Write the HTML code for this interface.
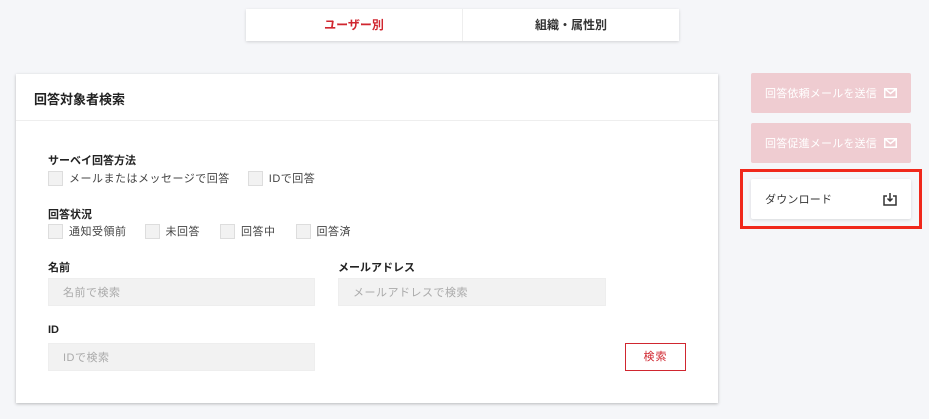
<!DOCTYPE html>
<html><head><meta charset="utf-8"><style>
*{box-sizing:border-box;margin:0;padding:0}
body{width:929px;height:419px;background:#f5f6f9;font-family:"Liberation Sans","Noto Sans CJK JP",sans-serif;position:relative;overflow:hidden;color:#333}
.abs{position:absolute}
.tabs{left:246px;top:9px;width:433px;height:32px;background:#fff;box-shadow:0 1px 3px rgba(0,0,0,.15);display:flex}
.tabs div{flex:1;text-align:center;line-height:32px;font-size:12px;font-weight:bold}
.tabs div:first-child{color:#d0262f;border-right:1px solid #eee}
.card{left:16px;top:74px;width:702px;height:329px;background:#fff;box-shadow:0 1px 3px rgba(0,0,0,.25)}
.hdr{height:47px;border-bottom:1px solid #eee;font-size:13px;font-weight:bold;padding:15px 0 0 18px;color:#222}
.lbl{font-size:11px;font-weight:bold;color:#222}
.cb{display:inline-block;width:15px;height:15px;background:#f2f2f2;border:1px solid #ddd;vertical-align:middle;margin-right:6px}
.row{font-size:11px;color:#444;white-space:nowrap;letter-spacing:0.5px}
.row span{margin-right:18px;display:inline-flex;align-items:center}
.row.s span{margin-right:20px}
.inp{background:#f2f2f2;border:1px solid #eee;height:28px;font-size:11px;color:#aaa;padding:5px 0 0 14px;letter-spacing:0.5px}
.btn{left:751px;width:160px;height:40px;border-radius:2px;font-size:11px;padding:0 14px;display:flex;align-items:center;justify-content:space-between;letter-spacing:0.2px;white-space:nowrap}
.pink{background:#efccd1;color:#fff}
</style></head><body>
<div class="abs tabs"><div>ユーザー別</div><div>組織・属性別</div></div>
<div class="abs card">
<div class="hdr">回答対象者検索</div>
<div class="abs lbl" style="left:32px;top:78px">サーベイ回答方法</div>
<div class="abs row" style="left:32px;top:96px"><span><i class="cb"></i>メールまたはメッセージで回答</span><span><i class="cb"></i>IDで回答</span></div>
<div class="abs lbl" style="left:32px;top:132px">回答状況</div>
<div class="abs row s" style="left:32px;top:149px"><span style="margin-right:18px"><i class="cb"></i>通知受領前</span><span><i class="cb"></i>未回答</span><span><i class="cb"></i>回答中</span><span><i class="cb"></i>回答済</span></div>
<div class="abs lbl" style="left:32px;top:185px">名前</div>
<div class="abs inp" style="left:32px;top:204px;width:267px">名前で検索</div>
<div class="abs lbl" style="left:322px;top:185px">メールアドレス</div>
<div class="abs inp" style="left:322px;top:204px;width:268px">メールアドレスで検索</div>
<div class="abs lbl" style="left:32px;top:250px">ID</div>
<div class="abs inp" style="left:32px;top:269px;width:267px">IDで検索</div>
<div class="abs" style="left:609px;top:269px;width:61px;height:28px;border:1px solid #d0262f;color:#d0262f;font-size:11px;text-align:center;line-height:26px;letter-spacing:1px">検索</div>
</div>
<div class="abs btn pink" style="top:73px">回答依頼メールを送信<svg width="13" height="10" viewBox="0 0 13 10"><rect x="0.75" y="0.75" width="11.5" height="8.5" fill="none" stroke="#fff" stroke-width="1.5"/><path d="M1 1l5.5 4.5L12 1" fill="none" stroke="#fff" stroke-width="1.5"/></svg></div>
<div class="abs btn pink" style="top:123px">回答促進メールを送信<svg width="13" height="10" viewBox="0 0 13 10"><rect x="0.75" y="0.75" width="11.5" height="8.5" fill="none" stroke="#fff" stroke-width="1.5"/><path d="M1 1l5.5 4.5L12 1" fill="none" stroke="#fff" stroke-width="1.5"/></svg></div>
<div class="abs" style="left:740px;top:169px;width:182px;height:60px;border:3px solid #f0281c"></div>
<div class="abs btn" style="top:179px;background:#fff;color:#333;box-shadow:0 1px 3px rgba(0,0,0,.12)">ダウンロード<svg width="14" height="13" viewBox="0 0 14 13"><path d="M4 3H1v9h12V3h-3" fill="none" stroke="#333" stroke-width="1.5"/><path d="M7 0v8M4.5 5.5L7 8l2.5-2.5" fill="none" stroke="#333" stroke-width="1.5"/></svg></div>
</body></html>
